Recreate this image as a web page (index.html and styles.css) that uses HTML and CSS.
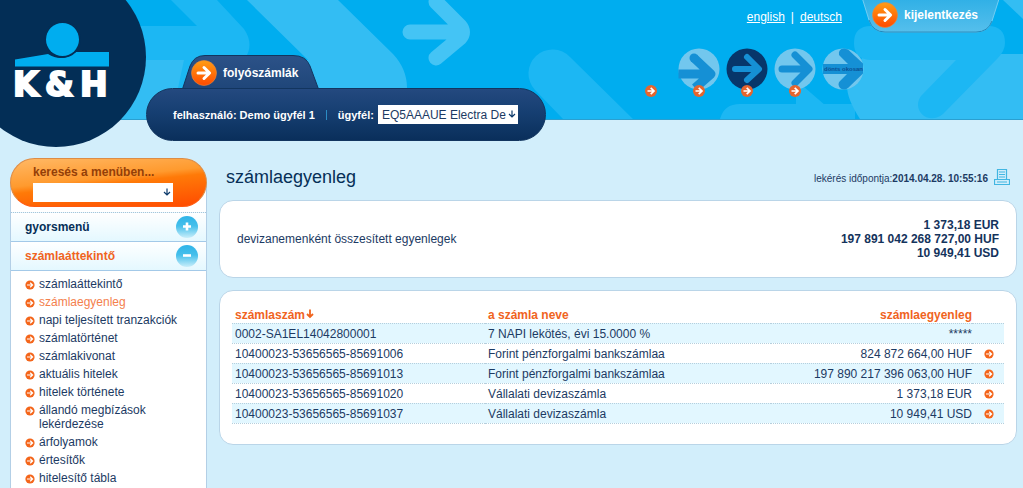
FILE: index.html
```html
<!DOCTYPE html>
<html lang="hu">
<head>
<meta charset="utf-8">
<title>K&amp;H – számlaegyenleg</title>
<link rel="stylesheet" href="styles.css">
</head>
<body>
<svg class="defs" aria-hidden="true">
  <defs>
    <linearGradient id="orange" x1="0" y1="0" x2="0" y2="1"><stop offset="0" stop-color="#ff9d14"/><stop offset="1" stop-color="#ff4a00"/></linearGradient>
    <linearGradient id="navy" x1="0" y1="0" x2="0" y2="1"><stop offset="0" stop-color="#2c5288"/><stop offset="1" stop-color="#1f4679"/></linearGradient>
    <linearGradient id="aqua" x1="0" y1="0" x2="0" y2="1"><stop offset="0" stop-color="#2fb4e8"/><stop offset="0.45" stop-color="#45bfeb"/><stop offset="1" stop-color="#c9eefa"/></linearGradient>
    <linearGradient id="sky" x1="0" y1="0" x2="0" y2="1"><stop offset="0" stop-color="#30b0e6"/><stop offset="1" stop-color="#55bfec"/></linearGradient>
  </defs>
  <symbol id="bullet" viewBox="0 0 10 10"><circle cx="5" cy="5" r="4.6" fill="#f4651a"/><path d="M2 5h5.5M5.2 2.7 7.6 5 5.2 7.3" fill="none" stroke="#fff" stroke-width="1.2"/></symbol>
  <symbol id="go" viewBox="0 0 26 26"><circle cx="13" cy="13" r="12.5" fill="url(#orange)" stroke="#e98a3c" stroke-width="0.6"/><path d="M7 13h11M13 7.5 18.6 13 13 18.5" fill="none" stroke="#fff" stroke-width="3" stroke-linecap="round" stroke-linejoin="round"/></symbol>
  <symbol id="mini" viewBox="0 0 12 12"><circle cx="6" cy="6" r="6" fill="#e5652e"/><path d="M2.5 6h6M5.7 2.8 9 6 5.7 9.2" fill="none" stroke="#fff" stroke-width="1.7"/></symbol>
  <symbol id="down" viewBox="0 0 8 8"><path d="M4 0.5v6M1 4l3 3 3-3" fill="none" stroke="#0d3a6b" stroke-width="1.2"/></symbol>
</svg>

<header class="header">
  <div class="backdrop" aria-hidden="true">
    <svg class="art" width="1023" height="119" viewBox="0 0 1023 119">
      <g fill="#1cb7f3">
        <path d="M100 26h97L171 0h46l27 29q11 16 0 31l-60 60h-84z"/>
        <path d="M535 90a24 24 0 0 1 35-33l63 62h-70z"/>
        <path d="M700 119h20q4-15 20-15h115v15zM796 80l45 39h-45z"/>
      </g>
      <path d="M100 60h208L247 0h91l55 54q14 15 14 34v31H100z" fill="#33bdf3"/>
      <path d="M184 60h54l-30 28h-30z" fill="#1cb7f3"/>
      <path d="M410 32h52M436 2l24 24q5 6 0 12l-24 20" fill="none" stroke="#44c4f5" stroke-width="15" stroke-linecap="round"/>
      <path d="M860 119q-13-20-13-33 4-26 24-32h152v65zM1003 0h20v19z" fill="#33bdf3"/>
      <path d="M854 43q0-17 17-17h117q17 0 17 17 0 8-8 16l-54 55c-15 12-32-4-22-18l35-36h-86q-16-1-16-17z" fill="#1cb7f3"/>
    </svg>
  </div>

  <a class="logo" href="#" aria-label="K&amp;H">
    <svg width="146" height="147" viewBox="0 0 146 147">
      <circle cx="56" cy="57" r="90" fill="#032e56"/>
      <path d="M15 59.500 48 54q14 9 28-2h33v14.500H15z" fill="#00adef"/>
      <circle cx="62.500" cy="39.500" r="18.500" fill="#032e56"/>
      <circle cx="62.500" cy="39.500" r="16.500" fill="#00adef"/>
      <text x="13 45 80" y="96" class="logo-text">K&amp;H</text>
    </svg>
  </a>

  <div class="account">
    <a class="tab" href="#">
      <svg class="tab-shape" width="138" height="34" viewBox="0 0 138 34" aria-hidden="true"><path d="M0.500 34 8 11Q12 0.500 23 0.500h88q13 0 17 10.500l8.500 23z" fill="url(#navy)" stroke="#12355f"/></svg>
      <svg width="26" height="26"><use href="#go"/></svg>
      <span>folyószámlák</span>
    </a>
    <div class="user-bar">
      <span>felhasználó: Demo ügyfél 1</span>
      <span class="divider"></span>
      <label for="client">ügyfél:</label>
      <span class="picker client">
        <select id="client"><option>EQ5AAAUE Electra Demo</option></select>
        <svg width="8" height="8"><use href="#down"/></svg>
      </span>
    </div>
  </div>

  <div class="tools">
    <div class="top-links">
      <nav class="languages"><a href="#">english</a><span>|</span><a href="#">deutsch</a></nav>
      <a class="logout" href="#">
        <svg class="tab-shape" width="138" height="34" viewBox="0 0 138 34" aria-hidden="true"><path d="M0.500-1 7 20q4 12 16 12h91q12 0 16-11l7-22z" fill="url(#sky)" stroke="#72cdf2"/><path d="M7 20q4 12 16 12h91q12 0 16-11" fill="none" stroke="#2288bb"/></svg>
        <svg width="26" height="26"><use href="#go"/></svg>
        <span>kijelentkezés</span>
      </a>
    </div>
    <nav class="shortcuts">
      <a href="#" aria-label="ugrás"><svg width="12" height="50"><use href="#mini" y="37" width="12" height="12"/></svg></a>
      <a href="#" aria-label="átutalás"><svg width="42" height="50" viewBox="0 0 42 50"><circle cx="21" cy="21" r="20.500" fill="#72c7ee"/><path d="M0.500 26h31M16 10l17 16-16 14" fill="none" stroke="#1590d5" stroke-width="9" stroke-linejoin="round"/><circle cx="16" cy="10" r="4.500" fill="#1590d5"/><use href="#mini" x="15" y="37" width="12" height="12"/></svg></a>
      <a href="#" aria-label="számlák"><svg width="42" height="50" viewBox="0 0 42 50"><circle cx="21" cy="21" r="20.500" fill="#07366a"/><path d="M9 21h23M21 9l12 12-12 11" fill="none" stroke="#1590d5" stroke-width="6" stroke-linecap="round" stroke-linejoin="round"/><use href="#mini" x="15" y="37" width="12" height="12"/></svg></a>
      <a href="#" aria-label="megbízások"><svg width="42" height="50" viewBox="0 0 42 50"><circle cx="21" cy="21" r="20.500" fill="#72c7ee"/><path d="M8 21h25M21 7l14 14-14 14" fill="none" stroke="#1590d5" stroke-width="7" stroke-linecap="round" stroke-linejoin="round"/><use href="#mini" x="15" y="37" width="12" height="12"/></svg></a>
      <a href="#"><svg width="42" height="50" viewBox="0 0 42 50"><circle cx="21" cy="21" r="20.500" fill="#72c7ee"/><path d="M1 16h25L17 7q-1-6 5-6.500l4 1 15 14v10L26 40q-4 3-8 0-3-4 0-7l7-7H1z" fill="#1590d5"/><text x="2" y="23" class="shortcut-text">dönts okosan</text></svg></a>
    </nav>
  </div>
</header>

<div class="page">
  <aside class="sidebar">
    <div class="search">
      <label for="search">keresés a menüben...</label>
      <span class="picker find">
        <select id="search"><option></option></select>
        <svg width="8" height="8"><use href="#down"/></svg>
      </span>
    </div>
    <button class="group" type="button"><span>gyorsmenü</span>
      <svg width="24" height="24" viewBox="0 0 24 24" aria-hidden="true"><circle cx="12" cy="12" r="11" fill="url(#aqua)"/><path d="M8 11.500h8M12 7.500v8" stroke="#fff" stroke-width="2.600"/></svg>
    </button>
    <button class="group open" type="button"><span>számlaáttekintő</span>
      <svg width="24" height="24" viewBox="0 0 24 24" aria-hidden="true"><circle cx="12" cy="12" r="11" fill="url(#aqua)"/><path d="M8 11.500h8" stroke="#fff" stroke-width="2.600"/></svg>
    </button>
    <ul class="menu">
      <li><svg width="10" height="10"><use href="#bullet"/></svg><a href="#">számlaáttekintő</a></li>
      <li><svg width="10" height="10"><use href="#bullet"/></svg><a class="current" href="#">számlaegyenleg</a></li>
      <li><svg width="10" height="10"><use href="#bullet"/></svg><a href="#">napi teljesített tranzakciók</a></li>
      <li><svg width="10" height="10"><use href="#bullet"/></svg><a href="#">számlatörténet</a></li>
      <li><svg width="10" height="10"><use href="#bullet"/></svg><a href="#">számlakivonat</a></li>
      <li><svg width="10" height="10"><use href="#bullet"/></svg><a href="#">aktuális hitelek</a></li>
      <li><svg width="10" height="10"><use href="#bullet"/></svg><a href="#">hitelek története</a></li>
      <li><svg width="10" height="10"><use href="#bullet"/></svg><a href="#">állandó megbízások lekérdezése</a></li>
      <li><svg width="10" height="10"><use href="#bullet"/></svg><a href="#">árfolyamok</a></li>
      <li><svg width="10" height="10"><use href="#bullet"/></svg><a href="#">értesítők</a></li>
      <li><svg width="10" height="10"><use href="#bullet"/></svg><a href="#">hitelesítő tábla</a></li>
    </ul>
  </aside>

  <main class="content">
    <div class="heading">
      <h1>számlaegyenleg</h1>
      <p class="queried">lekérés időpontja:<b>2014.04.28. 10:55:16</b></p>
      <button class="print" type="button" aria-label="nyomtatás">
        <svg width="16" height="16" viewBox="0 0 16 16"><path d="M3.500 10V0.500h9V10M5 3h6M5 5.500h6M5 8h6M0.500 10.500h15v5H0.500zM3 13h10" fill="none" stroke="#41b6e2" stroke-width="1.200"/></svg>
      </button>
    </div>

    <section class="card summary">
      <span>devizanemenként összesített egyenlegek</span>
      <ul><li>1 373,18 EUR</li><li>197 891 042 268 727,00 HUF</li><li>10 949,41 USD</li></ul>
    </section>

    <section class="card accounts">
      <table>
        <thead>
          <tr><th class="number">számlaszám<svg width="8" height="10" viewBox="0 0 8 10" aria-hidden="true"><path d="M4 0.500v7M1 5l3 3 3-3" fill="none" stroke="#f0641e" stroke-width="1.800"/></svg></th><th>a számla neve</th><th class="amount">számlaegyenleg</th><th class="action"></th></tr>
        </thead>
        <tbody>
          <tr><td>0002-SA1EL14042800001</td><td>7 NAPI lekötés, évi 15.0000 %</td><td class="amount">*****</td><td></td></tr>
          <tr><td>10400023-53656565-85691006</td><td>Forint pénzforgalmi bankszámlaa</td><td class="amount">824 872 664,00 HUF</td><td class="action"><a href="#" aria-label="részletek"><svg width="10" height="10"><use href="#bullet"/></svg></a></td></tr>
          <tr><td>10400023-53656565-85691013</td><td>Forint pénzforgalmi bankszámlaa</td><td class="amount">197 890 217 396 063,00 HUF</td><td class="action"><a href="#" aria-label="részletek"><svg width="10" height="10"><use href="#bullet"/></svg></a></td></tr>
          <tr><td>10400023-53656565-85691020</td><td>Vállalati devizaszámla</td><td class="amount">1 373,18 EUR</td><td class="action"><a href="#" aria-label="részletek"><svg width="10" height="10"><use href="#bullet"/></svg></a></td></tr>
          <tr><td>10400023-53656565-85691037</td><td>Vállalati devizaszámla</td><td class="amount">10 949,41 USD</td><td class="action"><a href="#" aria-label="részletek"><svg width="10" height="10"><use href="#bullet"/></svg></a></td></tr>
        </tbody>
      </table>
    </section>
  </main>
</div>
</body>
</html>
```
FILE: styles.css
```css
* { box-sizing: border-box; }

html { height: 100%; overflow: hidden; }

body {
  margin: 0;
  min-height: 100%;
  background: #d2eefb;
  color: #1c3a63;
  font: 12px/14px "Liberation Sans", Arial, sans-serif;
}

a { color: inherit; text-decoration: none; }
ul { list-style: none; margin: 0; padding: 0; }
svg { display: block; flex: none; }
button { border: 0; padding: 0; background: none; color: inherit; font: inherit; }
.defs { position: absolute; width: 0; height: 0; }

/* header */
.header { position: relative; display: flex; align-items: flex-start; }
.backdrop {
  position: absolute;
  inset: 0 0 auto;
  height: 120px;
  overflow: hidden;
  background: #00adef;
  border-bottom: 1px solid #2b9fd0;
}
.logo, .account, .tools { position: relative; }
.logo-text {
  fill: #fff;
  stroke: #fff;
  stroke-width: 2px;
  font: bold 33px "DejaVu Sans", sans-serif;
}

.account {
  flex: 0 0 400px;
  padding-top: 55px;
  color: #fff;
  font-weight: bold;
}
.tab, .logout {
  position: relative;
  display: flex;
  align-items: center;
  gap: 6px;
  width: 138px;
}
.tab {
  height: 33px;
  margin-left: 36px;
  padding: 3px 0 0 9px;
}
.tab > *, .logout > * { position: relative; }
.tab > .tab-shape, .logout > .tab-shape { position: absolute; inset: 0 auto auto 0; }
.user-bar {
  position: relative;
  display: flex;
  align-items: center;
  height: 53px;
  padding: 0 26px;
  border: 1px solid #12355f;
  border-radius: 27px;
  background: linear-gradient(#24497f, #163f72 45%, #0a2f5b);
  font-size: 11px;
  white-space: nowrap;
}
.divider { width: 1px; height: 10px; margin: 0 11px; background: #2b8cc4; }

.picker { position: relative; display: block; }
.picker select {
  appearance: none;
  display: block;
  width: 100%;
  height: 19px;
  border: 0;
  border-radius: 0;
  margin: 0;
  padding: 0 12px 0 4px;
  background: #fff;
  color: #1c3a63;
  font: 12px/14px "Liberation Sans", Arial, sans-serif;
}
.picker svg { position: absolute; right: 2px; top: 5px; pointer-events: none; }
.client { width: 140px; margin-left: 4px; }
.find { width: 140px; margin-top: 4px; }

.tools {
  flex: 1;
  display: flex;
  flex-direction: column;
  align-items: flex-end;
  gap: 16px;
}
.top-links {
  display: flex;
  align-items: center;
  gap: 20px;
  height: 32px;
  padding-right: 23px;
  color: #fff;
}
.languages { display: flex; gap: 6px; padding-top: 2px; }
.languages a { text-decoration: underline; }
.logout {
  height: 32px;
  padding: 0 0 2px 10px;
  font-weight: bold;
}
.shortcuts { display: flex; gap: 6px; padding-right: 159px; }
.shortcuts a:first-child { margin-right: 15px; }
.shortcut-text { fill: #0b4f93; font: bold 6px "Liberation Sans", sans-serif; }

/* page */
.page { display: flex; gap: 12px; padding: 11px 6px 0 10px; }

.sidebar {
  flex: 0 0 197px;
  border: solid #b3cfe6;
  border-width: 0 1px;
  border-image: linear-gradient(transparent 25px, #b3cfe6 25px) 1;
  background: linear-gradient(transparent 25px, #fff 25px);
}
.search {
  margin: 0 -1px 5px;
  height: 49px;
  padding: 6px 22px 0;
  border: 1px solid #dd8c46;
  border-bottom-color: #ff5a10;
  border-radius: 25px;
  background: linear-gradient(174deg, #ffb966, #ff9a2e 42%, #ff7a08 52%, #ff4a00);
  color: #943f08;
  font-weight: bold;
}
.search label { display: block; }
.group {
  display: flex;
  align-items: center;
  justify-content: space-between;
  width: 100%;
  height: 29px;
  padding: 0 7px 0 14px;
  border-top: 1px dotted #a9c4d8;
  background: linear-gradient(#fff, #e4f8ff);
  color: #062f57;
  font-weight: bold;
}
.group.open {
  height: 30px;
  border-top: 1px solid #a3c9e8;
  border-bottom: 1px solid #a3c9e8;
  color: #f0641e;
}
.menu { display: grid; gap: 4px; padding: 6px 14px; }
.menu li { display: flex; gap: 4px; }
.menu svg { margin-top: 3px; }
.current { color: #f4804d; }

.content { flex: 1; min-width: 0; }
.heading {
  display: flex;
  align-items: center;
  height: 42px;
  padding: 0 7px;
}
h1 { flex: 1; margin: 0 0 4px; color: #062f57; font-size: 18px; line-height: 22px; font-weight: normal; }
.queried { margin: 0 6px 0 0; font-size: 10px; }
.print { margin-bottom: 4px; }

.card {
  border: 1px solid #bad5e8;
  border-radius: 14px;
  background: #fff;
}
.summary {
  display: flex;
  align-items: center;
  justify-content: space-between;
  padding: 17px;
  margin-bottom: 12px;
}
.summary ul { font-weight: bold; text-align: right; color: #14335c; }

.accounts { padding: 16px 12px 20px; }
table { width: 100%; border-collapse: collapse; table-layout: fixed; }
th, td { height: 20px; padding: 2px 3px 0; text-align: left; }
th { height: 16px; padding-top: 0; color: #f0641e; }
th:nth-child(1) { width: 253px; }
th:nth-child(3) { width: 26%; }
th svg { display: inline-block; margin-left: 1px; }
tbody tr { border: dotted #b5cfdd; border-width: 1px 0; }
tbody tr:nth-child(odd) { background: #e2f7ff; }
th.amount, td.amount { padding-right: 0; text-align: right; }
th.action { width: 32px; }
td.action { padding-left: 12px; }
```
